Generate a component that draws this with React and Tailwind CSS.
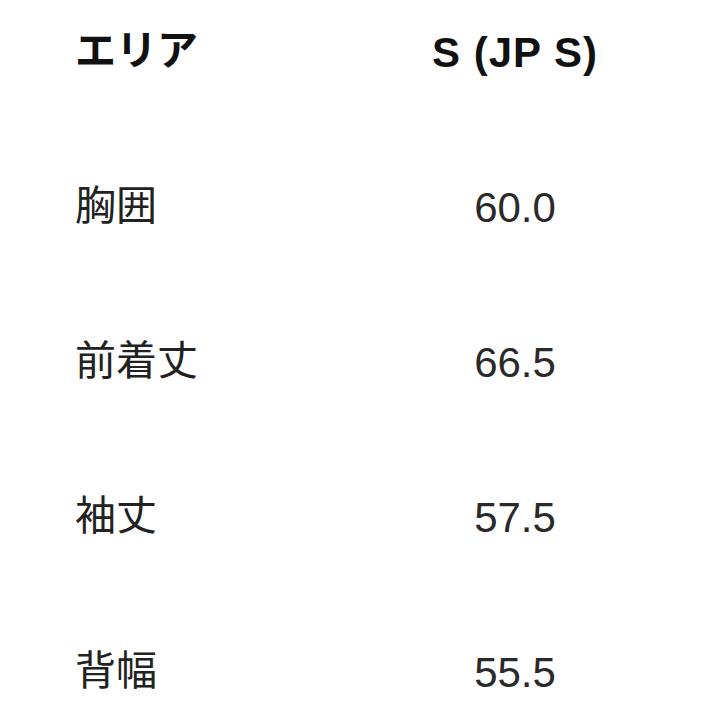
export default function App() {
  const rows = [
    ["胸囲", "60.0"],
    ["前着丈", "66.5"],
    ["袖丈", "57.5"],
    ["背幅", "55.5"],
  ];
  const font = { fontFamily: '"Liberation Sans", "Noto Sans CJK JP", sans-serif' };
  return (
    <div className="w-[726px] h-[726px] bg-white overflow-hidden" style={font}>
      <div className="flex flex-col gap-[95px] pt-[22px] pl-[75px]">
        <div className="flex items-center h-[60px] text-[41px] font-bold text-[#111]">
          <div className="w-[340px]">エリア</div>
          <div className="w-[200px] text-center tracking-[1px] text-[42px]">S (JP S)</div>
        </div>
        {rows.map(([a, b]) => (
          <div key={a} className="flex items-center h-[60px] text-[41px] text-[#222]">
            <div className="w-[340px]">{a}</div>
            <div className="w-[200px] text-center text-[42px] text-[#2a2a2a]">{b}</div>
          </div>
        ))}
      </div>
    </div>
  );
}
